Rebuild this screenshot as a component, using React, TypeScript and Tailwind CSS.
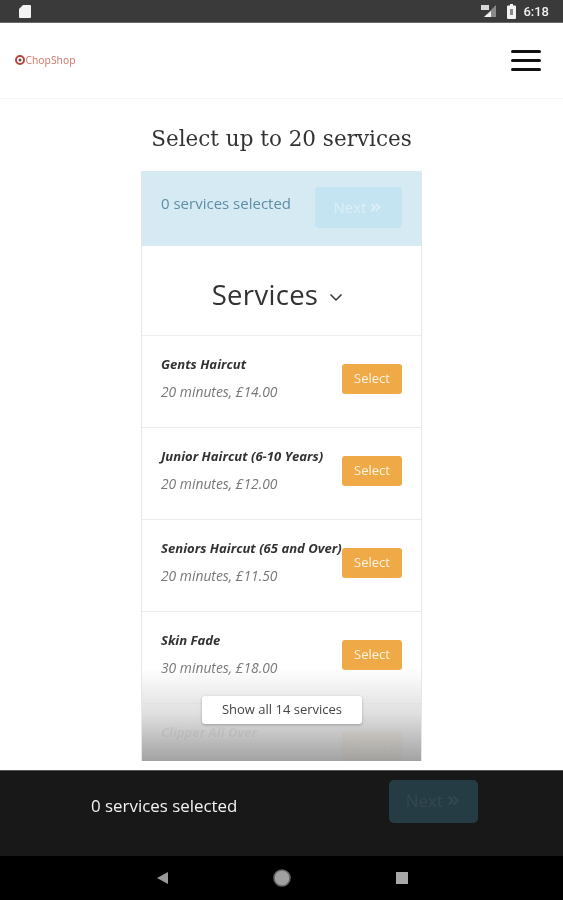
import { ChevronsRight } from "lucide-react";

const services = [
  { name: "Gents Haircut", detail: "20 minutes, £14.00" },
  { name: "Junior Haircut (6-10 Years)", detail: "20 minutes, £12.00" },
  { name: "Seniors Haircut (65 and Over)", detail: "20 minutes, £11.50" },
  { name: "Skin Fade", detail: "30 minutes, £18.00" },
  { name: "Clipper All Over", detail: "" },
];

function StatusBar() {
  return (
    <div className="h-[23px] shrink-0 bg-[#3a3a3a] border-b border-b-[#6a6a6a] flex items-center justify-between pl-[18px] pr-[14px]">
      <svg width="14" height="15" viewBox="0 0 14 15">
        <path d="M5 1h7a1 1 0 0 1 1 1v11a1 1 0 0 1-1 1H2a1 1 0 0 1-1-1V5z" fill="#f2f2f2" />
      </svg>
      <div className="flex items-center">
        <svg width="16" height="14" viewBox="0 0 16 14" className="mr-[10px]">
          <path d="M15 1v12H3z" fill="#8a8a8a" />
          <path d="M10 7v6H3z" fill="#f2f2f2" />
          <rect x="0" y="1" width="8" height="5" fill="#d8d8d8" />
        </svg>
        <svg width="9" height="15" viewBox="0 0 9 15" className="mr-[7px]">
          <path d="M3 0h3v1.500h2a1 1 0 0 1 1 1V14a1 1 0 0 1-1 1H1a1 1 0 0 1-1-1V2.500a1 1 0 0 1 1-1h2z" fill="#f2f2f2" />
          <rect x="3" y="5" width="3" height="6" fill="#8a8a8a" />
        </svg>
        <span className="text-[13px] leading-none font-medium text-[#f0f0f0] font-['Roboto',sans-serif]">6:18</span>
      </div>
    </div>
  );
}

function Header() {
  return (
    <div className="h-[76px] shrink-0 bg-white border-b border-b-[#f6f6f6] flex items-center justify-between pl-[15px] pr-[22px]">
      <div className="flex items-center gap-[0.500px]">
        <svg width="10" height="10" viewBox="0 0 10 10">
          <circle cx="5" cy="5" r="4" fill="none" stroke="#b8443c" strokeWidth="2" />
          <circle cx="5" cy="5" r="1.500" fill="#555" />
        </svg>
        <span className="text-[10.300px] leading-none text-[#d27a70] font-['Noto_Sans',sans-serif]">ChopShop</span>
      </div>
      <div className="w-[30px] flex flex-col gap-[6px]">
        <div className="h-[3px] rounded-full bg-[#111]" />
        <div className="h-[3px] rounded-full bg-[#111]" />
        <div className="h-[3px] rounded-full bg-[#111]" />
      </div>
    </div>
  );
}

function ServiceRow({ name, detail }: { name: string; detail: string }) {
  return (
    <div className="h-[92px] shrink-0 border-b border-b-[#ececec] flex pt-[18px] pl-[19px] pr-[19px] justify-between">
      <div className="min-w-0 whitespace-nowrap">
        <div className="text-[13.100px] leading-[20px] font-bold italic text-[#333]">{name}</div>
        {detail ? <div className="mt-[8px] text-[13.850px] leading-[20px] italic text-[#777]">{detail}</div> : null}
      </div>
      <div className="mt-[10px] w-[60px] h-[30px] shrink-0 rounded-[3px] bg-[#efaa47] text-[#fdf3e3] text-[13px] flex items-center justify-center">
        Select
      </div>
    </div>
  );
}

function Card() {
  return (
    <div className="relative w-[281px] h-[590px] mx-auto mt-[16px] overflow-hidden border-x border-x-[#e6e6e6] bg-white">
      <div className="h-[75px] bg-[#d6eaf4] flex items-start pt-[16px] pl-[19px] pr-[19px] justify-between">
        <span className="text-[15px] leading-[32px] text-[#5c8ea6]">0 services selected</span>
        <div className="w-[87px] h-[41px] rounded-[4px] bg-[#c4e4f1] text-[#dceff7] text-[15px] flex items-center justify-center gap-[2px]">
          Next
          <ChevronsRight size={15} strokeWidth={3} />
        </div>
      </div>
      <div className="h-[90px] border-b border-b-[#eeeeee] flex items-center justify-center gap-[11px] pt-[8px] pr-[8px]">
        <span className="text-[27.500px] tracking-[0.3px] text-[#333]">Services</span>
        <svg width="14" height="9" viewBox="0 0 14 9" className="mt-[6px]">
          <path d="M1.500 1.500 7 7l5.500-5.500" fill="none" stroke="#333" strokeWidth="1.500" />
        </svg>
      </div>
      {services.map((s) => (
        <ServiceRow key={s.name} name={s.name} detail={s.detail} />
      ))}
      <div className="absolute inset-x-0 bottom-0 h-[93px] bg-gradient-to-b from-[#ffffff00] via-[#dcdcdcee] via-50% to-[#a0a0a0f8]" />
      <div className="absolute left-[60px] bottom-[37px] w-[160px] h-[28px] rounded-[3px] bg-white shadow-[0_1px_3px_rgba(0,0,0,0.25)] text-[13px] text-[#444] flex items-center justify-center">
        Show all 14 services
      </div>
    </div>
  );
}

function BottomBar() {
  return (
    <div className="h-[86px] shrink-0 bg-[#181818] border-t border-t-[#555] flex items-start">
      <span className="ml-[91px] mt-[23px] text-[16.900px] leading-[24px] text-[#f2f2f2]">0 services selected</span>
      <div className="ml-[152px] mt-[9px] w-[89px] h-[43px] rounded-[5px] bg-[#263c45] text-[#35474f] text-[17px] flex items-center justify-center gap-[2px] pb-[2px]">
        Next
        <ChevronsRight size={17} strokeWidth={3} />
      </div>
    </div>
  );
}

function NavBar() {
  return (
    <div className="h-[44px] shrink-0 bg-black flex items-center justify-center gap-[105px]">
      <svg width="12" height="14" viewBox="0 0 12 14">
        <path d="M12 1v12L1 7z" fill="#9a9a9a" />
      </svg>
      <svg width="18" height="18" viewBox="0 0 18 18">
        <circle cx="9" cy="9" r="8" fill="#a0a0a0" stroke="#666" strokeWidth="1.500" />
      </svg>
      <svg width="12" height="12" viewBox="0 0 12 12">
        <rect width="12" height="12" fill="#a8a8a8" />
      </svg>
    </div>
  );
}

export default function App() {
  return (
    <div className="w-[563px] h-[900px] overflow-hidden flex flex-col bg-white blur-[0.4px] font-['Open_Sans',sans-serif]">
      <StatusBar />
      <Header />
      <div className="flex-1 min-h-0 overflow-hidden">
        <h1 className="mt-[24px] text-center text-[21.500px] leading-[32px] font-normal text-[#333] font-['DejaVu_Serif',serif]">
          Select up to 20 services
        </h1>
        <Card />
      </div>
      <BottomBar />
      <NavBar />
    </div>
  );
}
